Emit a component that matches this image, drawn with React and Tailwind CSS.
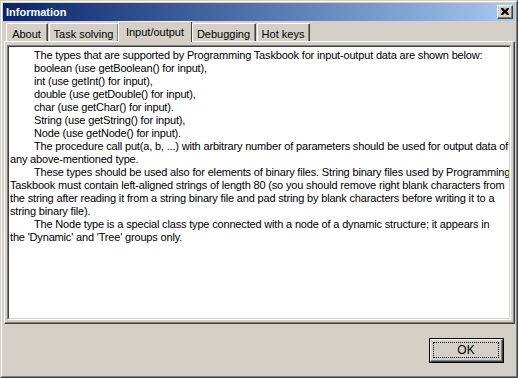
import React from "react";

const FONT = { fontFamily: '"Liberation Sans", Arial, sans-serif' };

// ── Text of the memo: one entry per visual line ──
const LINES = [
  { t: "The types that are supported by Programming Taskbook for input-output data are shown below:", i: true },
  { t: "boolean (use getBoolean() for input),", i: true },
  { t: "int (use getInt() for input),", i: true },
  { t: "double (use getDouble() for input),", i: true },
  { t: "char (use getChar() for input).", i: true },
  { t: "String (use getString() for input),", i: true },
  { t: "Node (use getNode() for input).", i: true },
  { t: "The procedure call put(a, b, ...) with arbitrary number of parameters should be used for output data of", i: true },
  { t: "any above-mentioned type." },
  { t: "These types should be used also for elements of binary files. String binary files used by Programming", i: true },
  { t: "Taskbook must contain left-aligned strings of length 80 (so you should remove right blank characters from" },
  { t: "the string after reading it from a string binary file and pad string by blank characters before writing it to a" },
  { t: "string binary file)." },
  { t: "The Node type is a special class type connected with a node of a dynamic structure; it appears in", i: true },
  { t: "the 'Dynamic' and 'Tree' groups only." },
];

const TABS = [
  { label: "About", w: "w-[41px]" },
  { label: "Task solving", w: "w-[69px]" },
  { label: "Input/output", w: "w-[74px]", active: true },
  { label: "Debugging", w: "w-[63px]" },
  { label: "Hot keys", w: "w-[52px]" },
];

function Tab({ label, w, active }) {
  if (active) {
    return (
      <div className={`${w} h-[21px] -mb-px -mx-[2px] z-10 bg-[#D4D0C8] border-l border-t border-white rounded-tl-[2px] flex`}>
        <div className="flex-1 border-r border-[#808080] flex">
          <div className="flex-1 flex items-start justify-center pt-[2px] text-[11px] text-black shadow-[1px_0_0_#404040]">
            {label}
          </div>
        </div>
      </div>
    );
  }
  return (
    <div className={`${w} h-[18px] bg-[#D4D0C8] border-l border-t border-white rounded-tl-[2px] flex`}>
      <div className="flex-1 border-r border-[#808080] flex items-start justify-center pt-[2px] text-[11px] text-black shadow-[1px_0_0_#404040]">
        {label}
      </div>
    </div>
  );
}

export default function App() {
  return (
    <div className="w-[518px] h-[378px] bg-[#D4D0C8]" style={FONT}>
      <div className="w-full h-full border border-t-[#D4D0C8] border-l-[#D4D0C8] border-b-[#404040] border-r-[#404040]">
        <div className="w-full h-full border border-t-white border-l-white border-b-[#808080] border-r-[#808080] pl-[2px] pr-px pt-px flex flex-col">
          {/* title bar */}
          <div className="-ml-px h-[18px] shrink-0 flex items-center justify-between pl-[3px] pr-[2px] bg-gradient-to-r from-[#0A246A] to-[#A6CAF0]">
            <span className="text-white font-bold text-[11px] leading-none">Information</span>
            <div className="w-[16px] h-[14px] bg-[#D4D0C8] border border-t-white border-l-white border-b-[#404040] border-r-[#404040] flex">
              <div className="flex-1 border-b border-r border-[#808080] flex items-center justify-center">
                <svg width="8" height="7" viewBox="0 0 8 7">
                  <path d="M0 0h2l2 2 2-2h2v1l-2 2.5 2 2.5v1h-2l-2-2-2 2h-2v-1l2-2.5-2-2.5z" fill="#000" />
                </svg>
              </div>
            </div>
          </div>

          {/* tabs */}
          <div className="h-[20px] shrink-0 flex items-end gap-[2px] pl-[2px]">
            {TABS.map((t) => (
              <Tab key={t.label} {...t} />
            ))}
          </div>

          {/* panel */}
          <div className="h-[283px] shrink-0 border border-t-white border-l-white border-b-[#404040] border-r-[#404040]">
            <div className="w-full h-full border-b border-r border-[#808080] pl-[2px] pt-[3px] pr-[2px] pb-[2px]">
              {/* memo */}
              <div className="w-full h-full border border-t-[#808080] border-l-[#808080] border-b-white border-r-white">
                <div className="w-full h-full overflow-hidden bg-white border border-t-[#404040] border-l-[#404040] border-b-[#D4D0C8] border-r-[#D4D0C8] pl-px pt-[2px] text-[11px] leading-[13px] text-black tracking-[-0.17px]">
                  {LINES.map((l, k) => (
                    <div key={k} className={`whitespace-nowrap ${l.i ? "pl-[24px]" : ""}`}>
                      {l.t}
                    </div>
                  ))}
                </div>
              </div>
            </div>
          </div>

          {/* bottom */}
          <div className="flex-1 flex justify-end items-start pt-[14px] pr-[11px]">
            <div className="w-[75px] h-[25px] border border-black flex">
              <div className="flex-1 border border-t-white border-l-white border-b-[#404040] border-r-[#404040] flex">
                <div className="flex-1 border-b border-r border-[#808080] p-[2px] flex">
                  <div className="flex-1 border border-dotted border-black flex items-center justify-center text-[12px] text-black">
                    OK
                  </div>
                </div>
              </div>
            </div>
          </div>
        </div>
      </div>
    </div>
  );
}
